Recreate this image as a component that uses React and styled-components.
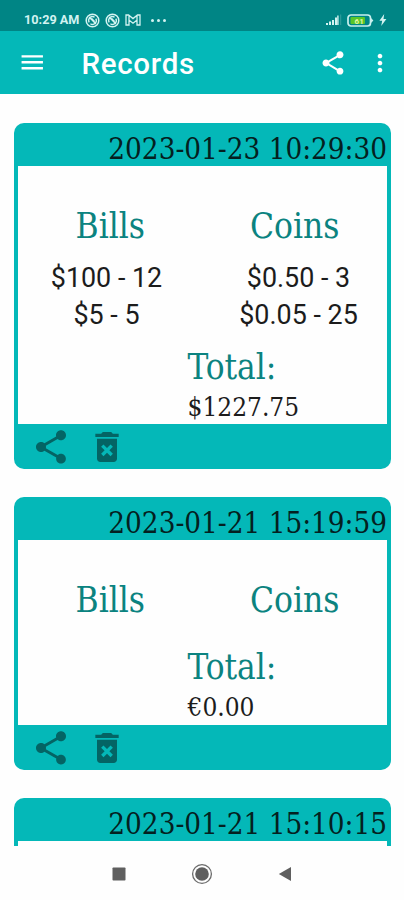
import React from 'react';
import styled, { createGlobalStyle } from 'styled-components';

const records = [
    {
        date: '2023-01-23 10:29:30',
        bills: ['$100 - 12', '$5 - 5'],
        coins: ['$0.50 - 3', '$0.05 - 25'],
        total: '$1227.75',
    },
    { date: '2023-01-21 15:19:59', bills: [], coins: [], total: '€0.00' },
    { date: '2023-01-21 15:10:15' },
];

const SHARE = 'M18 16.08c-.76 0-1.44.3-1.96.77L8.91 12.7c.05-.23.09-.46.09-.7s-.04-.47-.09-.7l7.05-4.11c.54.5 1.25.81 2.04.81 1.66 0 3-1.34 3-3s-1.34-3-3-3-3 1.34-3 3c0 .24.04.47.09.7L8.04 9.81C7.5 9.31 6.79 9 6 9c-1.66 0-3 1.34-3 3s1.34 3 3 3c.79 0 1.5-.31 2.04-.81l7.12 4.16c-.05.21-.08.43-.08.65 0 1.61 1.31 2.92 2.92 2.92s2.92-1.31 2.92-2.92-1.31-2.92-2.92-2.92z';
const DELETE = 'M6 19c0 1.1.9 2 2 2h8c1.1 0 2-.9 2-2V7H6v12zm2.46-7.12l1.41-1.41L12 12.59l2.12-2.12 1.41 1.41L13.41 14l2.12 2.12-1.41 1.41L12 15.41l-2.12 2.12-1.41-1.41L10.59 14l-2.13-2.12zM15.5 4l-1-1h-5l-1 1H5v2h14V4z';
const MENU = 'M3 18h18v-2H3v2zm0-5h18v-2H3v2zm0-7v2h18V6H3z';
const MORE = 'M12 8c1.1 0 2-.9 2-2s-.9-2-2-2-2 .9-2 2 .9 2 2 2zm0 2c-1.1 0-2 .9-2 2s.9 2 2 2 2-.9 2-2-.9-2-2-2zm0 6c-1.1 0-2 .9-2 2s.9 2 2 2 2-.9 2-2-.9-2-2-2z';

function Icon({ path, size }) {
    return (
        <svg width={size} height={size} viewBox="0 0 24 24" fill="currentColor">
            <path d={path} />
        </svg>
    );
}

function NoticeIcon() {
    return (
        <svg width="15" height="15" viewBox="0 0 15 15" fill="none" stroke="currentColor">
            <circle cx="7.5" cy="7.5" r="6.3" strokeWidth="1.5" />
            <path d="M4.2 9.4a3.8 3.8 0 0 1 5.4-5.1M10.8 5.6a3.8 3.8 0 0 1-5.4 5.1M4 4l7 7M6.4 5.2l3.4 3.4" strokeWidth="1.3" />
        </svg>
    );
}

function MailIcon() {
    return (
        <svg width="16" height="12" viewBox="0 0 16 12" fill="none" stroke="currentColor" strokeWidth="1.3">
            <path d="M1 1h2.5L8 4.6 12.5 1H15v10h-3V6L8 9.2 4 6v5H1zM4 1.4V6M12 1.4V6" />
        </svg>
    );
}

function StatusBar() {
    return (
        <Status>
            <Clock>10:29 AM</Clock>
            <Notices>
                <NoticeIcon />
                <NoticeIcon />
                <MailIcon />
            </Notices>
            <Dots>
                <i />
                <i />
                <i />
            </Dots>
            <Battery>
                {/* signal */}
                <svg width="16" height="12" viewBox="0 0 16 12" fill="currentColor">
                    <path d="M0 9h2v2H0zM3 7.5h2V11H3zM6 6h2v5H6zM9 3.5h2V11H9zM11.2 1.5h1.4V11h-1.4z" />
                    <path d="M14.2 0.5h1v10.5h-1z" opacity=".25" />
                </svg>
                {/* charge level */}
                <svg width="27" height="13" viewBox="0 0 27 13">
                    <rect x="1" y="1" width="22.5" height="11" rx="3" fill="none" stroke="#c8f0ee" strokeWidth="1.7" />
                    <path d="M24 4l2.4 2.5L24 9z" fill="#c8f0ee" />
                    <rect x="3.5" y="3" width="14.5" height="7" rx="1" fill="#58c629" />
                    <text x="12.2" y="9.6" textAnchor="middle" fontFamily="Roboto" fontWeight="700" fontSize="8" fill="#e4f7a6">61</text>
                </svg>
                <svg width="8" height="12" viewBox="0 0 8 12" fill="currentColor">
                    <path d="M5.2 0L.4 6.8h2.8L2.2 12l5.2-7H4.5z" />
                </svg>
            </Battery>
        </Status>
    );
}

function RecordDetails({ record }) {
    return (
        <>
            <Headings>
                <Heading>Bills</Heading>
                <Heading>Coins</Heading>
            </Headings>
            <Columns>
                <Column>
                    {record.bills.map((line) => <Line key={line}>{line}</Line>)}
                </Column>
                <Column>
                    {record.coins.map((line) => <Line key={line}>{line}</Line>)}
                </Column>
            </Columns>
            <Total>
                <TotalLabel>Total:</TotalLabel>
                <Amount>{record.total}</Amount>
            </Total>
        </>
    );
}

function Record({ record }) {
    return (
        <Card>
            <CardDate>{record.date}</CardDate>
            <CardBody>
                {record.total && <RecordDetails record={record} />}
            </CardBody>
            <CardActions>
                <CardButton><Icon path={SHARE} size={40} /></CardButton>
                <CardButton><Icon path={DELETE} size={40} /></CardButton>
            </CardActions>
        </Card>
    );
}

function App() {
    return (
        <Screen>
            <GlobalStyle />
            <StatusBar />
            <AppBar>
                <BarButton><Icon path={MENU} size={28.5} /></BarButton>
                <Title>Records</Title>
                <BarButton><Icon path={SHARE} size={28} /></BarButton>
                <BarButton $last><Icon path={MORE} size={28} /></BarButton>
            </AppBar>
            <List>
                {records.map((record) => <Record key={record.date} record={record} />)}
            </List>
            <NavBar>
                <svg width="14" height="14" viewBox="0 0 14 14"><rect x=".5" y=".5" width="13" height="13" rx=".8" fill="#5f5f5f" /></svg>
                <svg width="22" height="22" viewBox="0 0 22 22">
                    <circle cx="11" cy="11" r="9.4" fill="none" stroke="#6b6b6b" strokeWidth="1.3" />
                    <circle cx="11" cy="11" r="6.8" fill="#5f5f5f" />
                </svg>
                <svg width="14" height="16" viewBox="0 0 14 16"><path d="M.8 8L13 1v14z" fill="#5f5f5f" /></svg>
            </NavBar>
        </Screen>
    );
}

export default App;

const GlobalStyle = createGlobalStyle`
    body {
        margin: 0;
        background: #fefefe;
    }
    svg {
        display: block;
        flex-shrink: 0;
    }
`

const Screen = styled.div`
    width: 404px;
    height: 900px;
    display: flex;
    flex-direction: column;
    overflow: hidden;
    background: #fefefe;
    font-family: Roboto, sans-serif;
`

const Status = styled.div`
    height: 31px;
    flex-shrink: 0;
    box-sizing: border-box;
    display: flex;
    align-items: center;
    padding: 9px 17px 0 24px;
    background: #008585;
    color: #d3f3f1;
`

const Clock = styled.span`
    width: 61px;
    font-size: 12.7px;
    font-weight: 700;
    line-height: 16px;
    white-space: nowrap;
`

const Notices = styled.div`
    display: flex;
    align-items: center;
    gap: 5px;
`

const Dots = styled.div`
    display: flex;
    gap: 3px;
    margin-left: 10px;

    i {
        width: 3px;
        height: 3px;
        border-radius: 50%;
        background: currentColor;
    }
`

const Battery = styled.div`
    display: flex;
    align-items: center;
    gap: 5px;
    margin-left: auto;
`

const AppBar = styled.header`
    height: 63px;
    flex-shrink: 0;
    box-sizing: border-box;
    display: flex;
    align-items: center;
    padding: 0 10px 0 18px;
    background: #04b8b8;
    color: #fff;
`

const BarButton = styled.button`
    padding: 0;
    border: 0;
    background: none;
    color: inherit;
    margin-left: ${(props) => (props.$last ? '19px' : '0')};
`

const Title = styled.h1`
    flex: 1;
    margin: 0 0 0 35px;
    font-size: 29.5px;
    font-weight: 500;
    line-height: 34px;
    letter-spacing: 0.7px;
    padding-top: 2px;
`

const List = styled.main`
    flex: 1;
    min-height: 0;
    overflow: hidden;
    display: flex;
    flex-direction: column;
    gap: 28.2px;
    padding: 29px 13px 0 14px;
`

const Card = styled.article`
    flex-shrink: 0;
    padding: 0 4px;
    border-radius: 10px;
    background: #04b8b8;
    font-family: 'DejaVu Serif Condensed', 'DejaVu Serif', serif;
    font-stretch: semi-condensed;
`

const CardDate = styled.div`
    height: 43.2px;
    line-height: 52px;
    font-size: 29.3px;
    text-align: right;
    color: #042020;
    white-space: nowrap;
`

const CardBody = styled.div`
    min-height: 184.4px;
    background: #fefefe;
`

const Headings = styled.div`
    display: grid;
    grid-template-columns: 1fr 1fr;
    padding: 37.5px 0 12.5px;
`

const Heading = styled.h2`
    margin: 0;
    font-size: 35px;
    font-weight: 400;
    line-height: 44px;
    text-align: center;
    color: #0b8380;
`

const Columns = styled.div`
    display: flex;
    justify-content: space-between;
`

const Column = styled.div`
    width: 177px;
    display: flex;
    flex-direction: column;
    align-items: center;
`

const Line = styled.div`
    font-family: Roboto, sans-serif;
    font-stretch: normal;
    font-size: 26.9px;
    line-height: 36.7px;
    color: #1c1c1c;
    white-space: nowrap;
`

const Total = styled.div`
    padding: 12px 0 0 169.5px;
`

const TotalLabel = styled.div`
    font-size: 34.8px;
    line-height: 42px;
    color: #0b8380;
`

const Amount = styled.div`
    height: 36.4px;
    font-size: 26px;
    line-height: 39px;
    color: #1c1c1c;
`

const CardActions = styled.div`
    height: 45px;
    display: flex;
    align-items: center;
    gap: 16px;
    padding: 1px 0 0 12.5px;
    box-sizing: border-box;
`

const CardButton = styled.button`
    padding: 0;
    border: 0;
    background: none;
    color: #046464;
`

const NavBar = styled.nav`
    height: 54px;
    flex-shrink: 0;
    display: flex;
    align-items: center;
    justify-content: space-between;
    box-sizing: border-box;
    padding: 1px 112px 0;
    background: #fefefe;
`
